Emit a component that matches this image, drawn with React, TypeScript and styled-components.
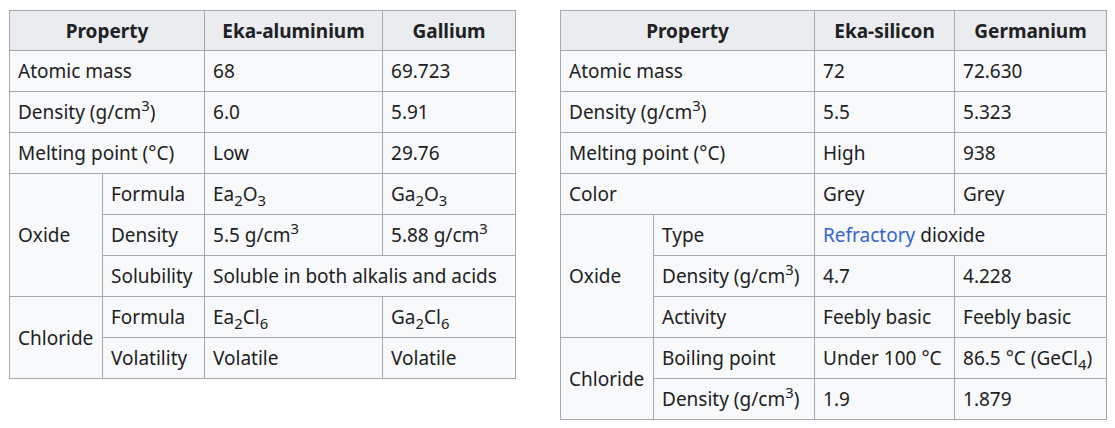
import styled, { createGlobalStyle } from "styled-components";

const GlobalStyle = createGlobalStyle`
  body {
    margin: 0;
    background: #ffffff;
    font-family: "Noto Sans", "Open Sans", sans-serif;
    color: #202122;
  }
`;

const Page = styled.div`
  display: flex;
  align-items: flex-start;
  gap: 44px;
  padding: 10px 0 0 9px;
`;

const Table = styled.table`
  border-collapse: collapse;
  table-layout: fixed;
  background: #f8f9fa;
  border: 1px solid #a2a9b1;
  font-size: 19px;
  color: #202122;
`;

const Th = styled.th`
  background: #eaecf0;
  border: 1px solid #a2a9b1;
  height: 39px;
  padding: 0 8px;
  font-weight: 700;
  text-align: center;
  vertical-align: middle;
  white-space: nowrap;
`;

const Td = styled.td`
  border: 1px solid #a2a9b1;
  height: 40px;
  padding: 0 8px;
  text-align: left;
  vertical-align: middle;
  white-space: nowrap;
`;

const Sub = styled.sub`
  font-size: 0.78em;
  line-height: 0;
  vertical-align: -0.35em;
`;

const Sup = styled.sup`
  font-size: 0.78em;
  line-height: 0;
  vertical-align: 0.55em;
`;

const WikiLink = styled.a`
  color: #3366cc;
  text-decoration: none;
`;

const Cm3 = () => (
  <>
    g/cm<Sup>3</Sup>
  </>
);

function GalliumTable() {
  return (
    <Table style={{ width: 506 }}>
      <colgroup>
        <col style={{ width: 93 }} />
        <col style={{ width: 102 }} />
        <col style={{ width: 178 }} />
        <col style={{ width: 133 }} />
      </colgroup>
      <thead>
        <tr>
          <Th colSpan={2}>Property</Th>
          <Th>Eka-aluminium</Th>
          <Th>Gallium</Th>
        </tr>
      </thead>
      <tbody>
        <tr>
          <Td colSpan={2}>Atomic mass</Td>
          <Td>68</Td>
          <Td>69.723</Td>
        </tr>
        <tr>
          <Td colSpan={2}>
            Density (<Cm3 />)
          </Td>
          <Td>6.0</Td>
          <Td>5.91</Td>
        </tr>
        <tr>
          <Td colSpan={2}>Melting point (°C)</Td>
          <Td>Low</Td>
          <Td>29.76</Td>
        </tr>
        <tr>
          <Td rowSpan={3}>Oxide</Td>
          <Td>Formula</Td>
          <Td>
            Ea<Sub>2</Sub>O<Sub>3</Sub>
          </Td>
          <Td>
            Ga<Sub>2</Sub>O<Sub>3</Sub>
          </Td>
        </tr>
        <tr>
          <Td>Density</Td>
          <Td>
            5.5 <Cm3 />
          </Td>
          <Td>
            5.88 <Cm3 />
          </Td>
        </tr>
        <tr>
          <Td>Solubility</Td>
          <Td colSpan={2}>Soluble in both alkalis and acids</Td>
        </tr>
        <tr>
          <Td rowSpan={2}>Chloride</Td>
          <Td>Formula</Td>
          <Td>
            Ea<Sub>2</Sub>Cl<Sub>6</Sub>
          </Td>
          <Td>
            Ga<Sub>2</Sub>Cl<Sub>6</Sub>
          </Td>
        </tr>
        <tr>
          <Td>Volatility</Td>
          <Td>Volatile</Td>
          <Td>Volatile</Td>
        </tr>
      </tbody>
    </Table>
  );
}

function GermaniumTable() {
  return (
    <Table style={{ width: 546 }}>
      <colgroup>
        <col style={{ width: 93 }} />
        <col style={{ width: 161 }} />
        <col style={{ width: 140 }} />
        <col style={{ width: 152 }} />
      </colgroup>
      <thead>
        <tr>
          <Th colSpan={2}>Property</Th>
          <Th>Eka-silicon</Th>
          <Th>Germanium</Th>
        </tr>
      </thead>
      <tbody>
        <tr>
          <Td colSpan={2}>Atomic mass</Td>
          <Td>72</Td>
          <Td>72.630</Td>
        </tr>
        <tr>
          <Td colSpan={2}>
            Density (<Cm3 />)
          </Td>
          <Td>5.5</Td>
          <Td>5.323</Td>
        </tr>
        <tr>
          <Td colSpan={2}>Melting point (°C)</Td>
          <Td>High</Td>
          <Td>938</Td>
        </tr>
        <tr>
          <Td colSpan={2}>Color</Td>
          <Td>Grey</Td>
          <Td>Grey</Td>
        </tr>
        <tr>
          <Td rowSpan={3}>Oxide</Td>
          <Td>Type</Td>
          <Td colSpan={2}>
            <WikiLink href="#">Refractory</WikiLink> dioxide
          </Td>
        </tr>
        <tr>
          <Td>
            Density (<Cm3 />)
          </Td>
          <Td>4.7</Td>
          <Td>4.228</Td>
        </tr>
        <tr>
          <Td>Activity</Td>
          <Td>Feebly basic</Td>
          <Td>Feebly basic</Td>
        </tr>
        <tr>
          <Td rowSpan={2}>Chloride</Td>
          <Td>Boiling point</Td>
          <Td>Under 100 °C</Td>
          <Td>
            86.5 °C (GeCl<Sub>4</Sub>)
          </Td>
        </tr>
        <tr>
          <Td>
            Density (<Cm3 />)
          </Td>
          <Td>1.9</Td>
          <Td>1.879</Td>
        </tr>
      </tbody>
    </Table>
  );
}

export default function App() {
  return (
    <>
      <GlobalStyle />
      <Page>
        <GalliumTable />
        <GermaniumTable />
      </Page>
    </>
  );
}
